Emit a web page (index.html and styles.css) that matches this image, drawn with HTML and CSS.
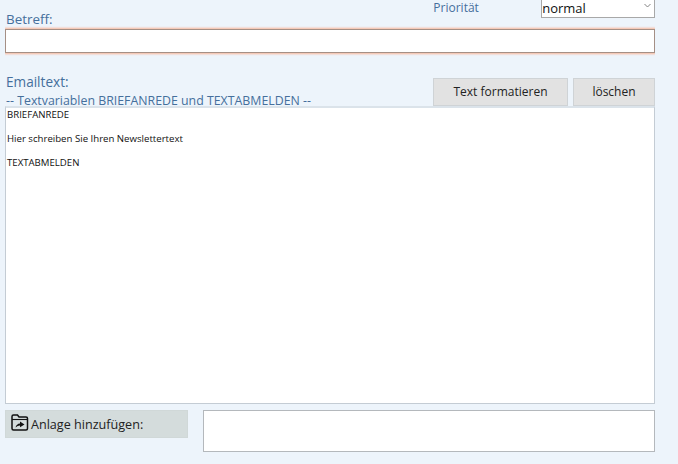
FILE: index.html
```html
<!DOCTYPE html>
<html lang="de">
<head>
<meta charset="utf-8">
<title>Newsletter</title>
<link rel="stylesheet" href="styles.css">
</head>
<body>
<main class="form">
  <div class="top-row">
    <label class="label subject-label">Betreff:</label>
    <span class="priority-label">Priorität</span>
    <div class="select">
      <span>normal</span>
      <svg class="chevron" width="7" height="5" viewBox="0 0 7 5"><path d="M0.5 1 L3.5 4 L6.5 1" fill="none" stroke="#777" stroke-width="0.9"/></svg>
    </div>
  </div>
  <div class="subject-input"></div>
  <div class="mail-row">
    <div class="mail-labels">
      <div class="label label-mail">Emailtext:</div>
      <div class="hint">-- Textvariablen BRIEFANREDE und TEXTABMELDEN --</div>
    </div>
    <div class="buttons">
      <button class="btn btn-format">Text formatieren</button>
      <button class="btn btn-clear">löschen</button>
    </div>
  </div>
  <div class="editor">
    <p>BRIEFANREDE</p>
    <p>Hier schreiben Sie Ihren Newslettertext</p>
    <p>TEXTABMELDEN</p>
  </div>
  <div class="attach-row">
    <div class="attach-btn">
      <svg class="folder" width="18" height="17" viewBox="0 0 18 17"><path d="M2.5 16 Q1 16 1 14.5 L1 2.5 Q1 1 2.5 1 L6.5 1 L8 3 L15 3 Q16.5 3 16.5 4.5 L16.5 14.5 Q16.5 16 15 16 Z" fill="none" stroke="#111" stroke-width="1.5"/><path d="M1 5.5 L16.5 5.5" stroke="#111" stroke-width="1.1"/><path d="M4.5 13.5 Q5.5 9.8 9 9.5 L9 7.5 L13.5 10.5 L9 13.3 L9 11.5 Q6.5 11.5 4.5 13.5 Z" fill="#111"/></svg>
      <span>Anlage hinzufügen:</span>
    </div>
    <div class="attach-box"></div>
  </div>
</main>
</body>
</html>
```
FILE: styles.css
```css
* { box-sizing: border-box; }
html, body { margin: 0; height: 100%; }
body {
  background: #edf4fb;
  font-family: "Open Sans", "Noto Sans", sans-serif;
  overflow: hidden;
}
.form {
  width: 650px;
  margin-left: 5px;
  height: 464px;
  overflow: hidden;
}
.top-row {
  display: flex;
  height: 31px;
  margin-top: -2px;
}
.label {
  color: #456f9c;
  font-size: 13.6px;
  line-height: 20px;
}
.subject-label { width: 428px; padding-top: 11px; margin-left: 1px; height: 31px; font-size: 13.4px; }
.priority-label {
  width: 108px;
  color: #456f9c;
  font-size: 12px;
  line-height: 18px;
  padding-top: 1px;
}
.select {
  width: 114px;
  height: 20px;
  background: #fff;
  border: 1px solid #a8a8a8;
  border-top: 0;
  display: flex;
  align-items: center;
  justify-content: space-between;
  padding: 0 3px 0 0;
  font-size: 13px;
  color: #111;
}
.chevron { margin-bottom: 5px; }
.subject-input {
  height: 24px;
  background: #fff;
  border: 1px solid #a58f85;
  box-shadow: 0 0 2px 1px #f9b598;
}
.mail-row {
  display: flex;
  justify-content: space-between;
  height: 53px;
  padding-top: 17px;
}
.mail-labels { margin-left: 1px; padding-top: 2px; }
.hint {
  color: #456f9c;
  font-size: 12.35px;
  line-height: 15px;
  margin-top: 1px;
  white-space: nowrap;
}
.buttons { display: flex; gap: 5px; height: 28px; margin-top: 8px; }
.btn {
  font-family: inherit;
  font-size: 12px;
  color: #222;
  background: #e2e2e2;
  border: 1px solid #cfd3d6;
  padding: 0 0 1px;
}
.btn-format { width: 135px; }
.btn-clear { width: 82px; }
.editor {
  height: 298px;
  background: #fff;
  border: 1px solid #c4ccd4;
  border-top: 2px solid #dbe3ea;
  padding: 1px 1px 0;
  font-size: 9.65px;
  line-height: 12px;
  color: #111;
}
.editor p { margin: 0 0 12px; }
.attach-row { display: flex; margin-top: 6px; }
.attach-btn {
  width: 183px;
  height: 28px;
  background: #d4dcdc;
  border: 1px solid #d0d8d8;
  display: flex;
  align-items: center;
  gap: 2px;
  padding-left: 5px;
  font-size: 12.6px;
  color: #222;
}
.folder { margin-bottom: 3px; }
.attach-box {
  width: 452px;
  height: 42px;
  margin-left: 15px;
  background: #fff;
  border: 1px solid #b4b8bc;
}
```
